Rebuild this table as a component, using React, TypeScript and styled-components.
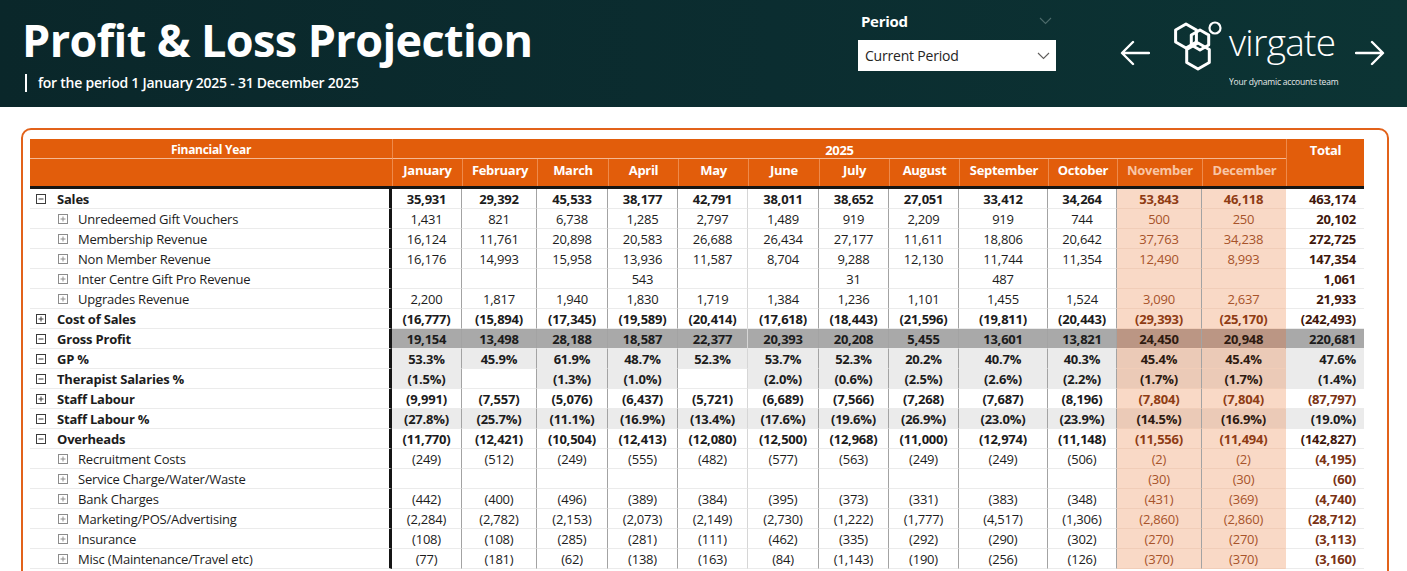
import React from 'react'
import styled, { createGlobalStyle } from 'styled-components'

const GlobalStyle = createGlobalStyle`
  html, body {
    margin: 0;
    padding: 0;
    background: #ffffff;
  }
  body {
    font-family: "Open Sans", "Noto Sans", sans-serif;
  }
  * {
    box-sizing: border-box;
  }
`

// column widths: label, Jan..Dec, Total
const COLS = '362px 70px 75px 71px 70px 70px 71px 70px 70px 89px 69px 85px 84px 78px'

const MONTHS = [
    'January', 'February', 'March', 'April', 'May', 'June',
    'July', 'August', 'September', 'October', 'November', 'December',
]

// November + December are the projected months
const FORECAST_FROM = 10

type Tone = 'dark' | 'light'

interface PLRow {
    label: string;
    level: 0 | 1;
    open?: boolean;
    bold?: boolean;
    tone?: Tone;
    mutedTotal?: boolean;
    values: string[];
}

const ROWS: PLRow[] = [
    { label: 'Sales', level: 0, open: true, bold: true, values: ['35,931', '29,392', '45,533', '38,177', '42,791', '38,011', '38,652', '27,051', '33,412', '34,264', '53,843', '46,118', '463,174'] },
    { label: 'Unredeemed Gift Vouchers', level: 1, values: ['1,431', '821', '6,738', '1,285', '2,797', '1,489', '919', '2,209', '919', '744', '500', '250', '20,102'] },
    { label: 'Membership Revenue', level: 1, values: ['16,124', '11,761', '20,898', '20,583', '26,688', '26,434', '27,177', '11,611', '18,806', '20,642', '37,763', '34,238', '272,725'] },
    { label: 'Non Member Revenue', level: 1, values: ['16,176', '14,993', '15,958', '13,936', '11,587', '8,704', '9,288', '12,130', '11,744', '11,354', '12,490', '8,993', '147,354'] },
    { label: 'Inter Centre Gift Pro Revenue', level: 1, values: ['', '', '', '543', '', '', '31', '', '487', '', '', '', '1,061'] },
    { label: 'Upgrades Revenue', level: 1, values: ['2,200', '1,817', '1,940', '1,830', '1,719', '1,384', '1,236', '1,101', '1,455', '1,524', '3,090', '2,637', '21,933'] },
    { label: 'Cost of Sales', level: 0, bold: true, values: ['(16,777)', '(15,894)', '(17,345)', '(19,589)', '(20,414)', '(17,618)', '(18,443)', '(21,596)', '(19,811)', '(20,443)', '(29,393)', '(25,170)', '(242,493)'] },
    { label: 'Gross Profit', level: 0, open: true, bold: true, tone: 'dark', values: ['19,154', '13,498', '28,188', '18,587', '22,377', '20,393', '20,208', '5,455', '13,601', '13,821', '24,450', '20,948', '220,681'] },
    { label: 'GP %', level: 0, open: true, bold: true, tone: 'light', values: ['53.3%', '45.9%', '61.9%', '48.7%', '52.3%', '53.7%', '52.3%', '20.2%', '40.7%', '40.3%', '45.4%', '45.4%', '47.6%'] },
    { label: 'Therapist Salaries %', level: 0, open: true, bold: true, tone: 'light', values: ['(1.5%)', '', '(1.3%)', '(1.0%)', '', '(2.0%)', '(0.6%)', '(2.5%)', '(2.6%)', '(2.2%)', '(1.7%)', '(1.7%)', '(1.4%)'] },
    { label: 'Staff Labour', level: 0, bold: true, mutedTotal: true, values: ['(9,991)', '(7,557)', '(5,076)', '(6,437)', '(5,721)', '(6,689)', '(7,566)', '(7,268)', '(7,687)', '(8,196)', '(7,804)', '(7,804)', '(87,797)'] },
    { label: 'Staff Labour %', level: 0, open: true, bold: true, tone: 'light', values: ['(27.8%)', '(25.7%)', '(11.1%)', '(16.9%)', '(13.4%)', '(17.6%)', '(19.6%)', '(26.9%)', '(23.0%)', '(23.9%)', '(14.5%)', '(16.9%)', '(19.0%)'] },
    { label: 'Overheads', level: 0, open: true, bold: true, values: ['(11,770)', '(12,421)', '(10,504)', '(12,413)', '(12,080)', '(12,500)', '(12,968)', '(11,000)', '(12,974)', '(11,148)', '(11,556)', '(11,494)', '(142,827)'] },
    { label: 'Recruitment Costs', level: 1, mutedTotal: true, values: ['(249)', '(512)', '(249)', '(555)', '(482)', '(577)', '(563)', '(249)', '(249)', '(506)', '(2)', '(2)', '(4,195)'] },
    { label: 'Service Charge/Water/Waste', level: 1, mutedTotal: true, values: ['', '', '', '', '', '', '', '', '', '', '(30)', '(30)', '(60)'] },
    { label: 'Bank Charges', level: 1, mutedTotal: true, values: ['(442)', '(400)', '(496)', '(389)', '(384)', '(395)', '(373)', '(331)', '(383)', '(348)', '(431)', '(369)', '(4,740)'] },
    { label: 'Marketing/POS/Advertising', level: 1, mutedTotal: true, values: ['(2,284)', '(2,782)', '(2,153)', '(2,073)', '(2,149)', '(2,730)', '(1,222)', '(1,777)', '(4,517)', '(1,306)', '(2,860)', '(2,860)', '(28,712)'] },
    { label: 'Insurance', level: 1, mutedTotal: true, values: ['(108)', '(108)', '(285)', '(281)', '(111)', '(462)', '(335)', '(292)', '(290)', '(302)', '(270)', '(270)', '(3,113)'] },
    { label: 'Misc (Maintenance/Travel etc)', level: 1, mutedTotal: true, values: ['(77)', '(181)', '(62)', '(138)', '(163)', '(84)', '(1,143)', '(190)', '(256)', '(126)', '(370)', '(370)', '(3,160)'] },
]

/* ---------- banner ---------- */

const Page = styled.div`
    width: 1407px;
    height: 571px;
    overflow: hidden;
    background: #ffffff;
`

const Banner = styled.header`
    height: 107px;
    display: grid;
    grid-template-columns: 858px 198px 1fr;
    color: #ffffff;
    background: linear-gradient(90deg, #0a272a 0%, #0b2d30 55%, #0c3434 100%);
`

const TitleBlock = styled.div`
    padding: 12px 0 0 22px;
`

const Title = styled.h1`
    margin: 0;
    font-size: 45px;
    line-height: 56px;
    font-weight: 700;
    letter-spacing: -0.6px;
`

const Subtitle = styled.div`
    margin-top: 5px;
    padding-left: 3px;
    display: flex;
    align-items: center;
    font-size: 14px;
    font-weight: 600;
    letter-spacing: -0.25px;

    &::before {
        content: "";
        width: 2px;
        height: 18px;
        margin-right: 11px;
        background: #ffffff;
    }
`

const Slicer = styled.div`
    padding-top: 10px;
`

const SlicerHead = styled.div`
    height: 21px;
    padding: 0 4px 0 3px;
    display: flex;
    align-items: center;
    justify-content: space-between;
    font-size: 15px;
    font-weight: 700;
    letter-spacing: -0.3px;
`

const Dropdown = styled.div`
    margin-top: 9px;
    height: 31px;
    padding: 0 6px 0 7px;
    display: flex;
    align-items: center;
    justify-content: space-between;
    background: #ffffff;
    color: #252423;
    font-size: 14px;
    letter-spacing: -0.2px;
`

const Brand = styled.div`
    padding: 18px 0 0 64px;
    display: flex;
    align-items: flex-start;
`

const NavArrow = styled.svg`
    margin-top: 22px;
    flex: none;
`

const Logo = styled.div`
    margin: 0 17px 0 23px;
    display: flex;
    align-items: flex-start;
`

const Wordmark = styled.div`
    margin-left: 6px;
    display: flex;
    flex-direction: column;
`

const WordmarkName = styled.span`
    font-size: 37px;
    line-height: 40px;
    font-weight: 300;
    letter-spacing: -0.7px;
    margin-top: 4px;
`

const Tagline = styled.span`
    margin-top: 14px;
    font-size: 8.5px;
    letter-spacing: -0.2px;
    opacity: 0.9;
`

/* ---------- table ---------- */

const Content = styled.main`
    padding: 21px 18px 0 21px;
`

const Card = styled.section`
    height: 470px;
    padding: 9px 0 0 7px;
    border: 2px solid #e2621a;
    border-radius: 10px;
`

const HeadGrid = styled.div`
    width: 1334px;
    display: grid;
    grid-template-columns: ${COLS};
    grid-template-rows: 20px 27px;
    background: #e25d0b;
    color: #ffffff;
    font-weight: 700;
    border-bottom: 3px solid #151515;
`

const GroupCell = styled.div<{ $span: string }>`
    grid-column: ${p => p.$span};
    grid-row: 1;
    border-bottom: 1px solid #f5b893;
    text-align: center;
    font-size: 12px;
    line-height: 22px;
    letter-spacing: -0.3px;
`

const YearCell = styled(GroupCell)`
    border-left: 1px solid #ee8a4c;
    font-size: 13px;
`

const TotalHead = styled.div`
    grid-column: 14;
    grid-row: 1 / 3;
    border-left: 1px solid #ee8a4c;
    text-align: center;
    font-size: 13px;
    line-height: 22px;
    letter-spacing: -0.3px;
`

const MonthHead = styled.div<{ $forecast: boolean }>`
    grid-row: 2;
    border-left: 1px solid #ee8a4c;
    display: flex;
    align-items: center;
    justify-content: center;
    padding-bottom: 5px;
    font-size: 13px;
    letter-spacing: -0.3px;
    color: ${p => (p.$forecast ? '#f8c6a6' : '#ffffff')};
`

const BodyRow = styled.div`
    width: 1334px;
    height: 20px;
    display: grid;
    grid-template-columns: ${COLS};
    font-size: 13px;
    letter-spacing: -0.2px;
    color: #1c1c1c;
`

const LabelCell = styled.div<{ $level: 0 | 1; $bold?: boolean }>`
    padding-left: ${p => (p.$level === 0 ? 6 : 28)}px;
    display: flex;
    align-items: center;
    gap: ${p => (p.$level === 0 ? 11 : 10)}px;
    border-right: 3px solid #151515;
    border-bottom: 1px solid #ebebeb;
    font-weight: ${p => (p.$bold ? 700 : 400)};
    white-space: nowrap;
`

const cellBackground = (forecast: boolean, tone?: Tone) => {
    if (tone === 'dark') return forecast ? '#bb9684' : '#a9a9a9'
    if (tone === 'light') return forecast ? '#ebcab7' : '#ebebeb'
    return forecast ? '#f9d9c6' : 'transparent'
}

const ValueCell = styled.div<{ $forecast: boolean; $tone?: Tone; $bold?: boolean; $divider: 'hard' | 'soft' | 'none' }>`
    display: flex;
    align-items: center;
    justify-content: center;
    padding-top: 1px;
    border-bottom: 1px solid ${p => (p.$forecast ? '#f1cdb8' : '#ebebeb')};
    border-right: 1px solid ${p => (p.$divider === 'hard' ? '#a3a3a3' : p.$divider === 'soft' ? '#d6d6d6' : 'transparent')};
    background: ${p => cellBackground(p.$forecast, p.$tone)};
    font-weight: ${p => (p.$bold ? 700 : 400)};
    color: ${p => {
        if (!p.$forecast) return '#1c1c1c'
        if (p.$tone) return '#2e1a10'
        return p.$bold ? '#8f3c14' : '#a7532a'
    }};
`

const TotalCell = styled.div<{ $tone?: Tone; $muted?: boolean }>`
    display: flex;
    align-items: center;
    justify-content: flex-end;
    padding: 1px 8px 0 0;
    border-bottom: 1px solid #ebebeb;
    background: ${p => cellBackground(false, p.$tone)};
    font-weight: 700;
    color: ${p => (p.$tone ? '#1c1c1c' : p.$muted ? '#7a3214' : '#3f170b')};
`

function ToggleBox({ open, level }: { open?: boolean; level: 0 | 1 }) {
    const stroke = level === 0 ? '#3c3c3c' : '#8c8c8c'
    return (
        <svg width="10" height="10" viewBox="0 0 10 10" style={{ flex: 'none' }}>
            <rect x="0.5" y="0.5" width="9" height="9" fill="#ffffff" stroke={stroke} />
            <line x1="2.5" y1="5" x2="7.5" y2="5" stroke={stroke} />
            {!open && <line x1="5" y1="2.5" x2="5" y2="7.5" stroke={stroke} />}
        </svg>
    )
}

function Chevron({ color }: { color: string }) {
    return (
        <svg width="13" height="8" viewBox="0 0 13 8">
            <polyline points="1,1 6.5,6.5 12,1" fill="none" stroke={color} strokeWidth="1.1" />
        </svg>
    )
}

function Arrow({ dir }: { dir: 'left' | 'right' }) {
    const d = dir === 'left' ? 'M29 13H3 M13 2 2 13l11 11' : 'M1 13h26 M17 2l11 11-11 11'
    return (
        <NavArrow width="30" height="26" viewBox="0 0 30 26">
            <path d={d} fill="none" stroke="#ffffff" strokeWidth="2.4" strokeLinecap="round" strokeLinejoin="round" />
        </NavArrow>
    )
}

// pointy-top hexagon outline around a centre
const hex = (cx: number, cy: number, r: number) =>
    [0, 1, 2, 3, 4, 5]
        .map(i => {
            const a = (Math.PI / 3) * i - Math.PI / 2
            return `${(cx + r * Math.cos(a)).toFixed(1)},${(cy + r * Math.sin(a)).toFixed(1)}`
        })
        .join(' ')

function VirgateMark() {
    return (
        <svg width="50" height="54" viewBox="0 0 50 54">
            <g fill="none" stroke="#ffffff" strokeWidth="3" strokeLinejoin="round">
                <polygon points={hex(13, 18, 12)} />
                <polygon points={hex(27, 22, 10)} />
                <polygon points={hex(25, 38, 13)} />
                <circle cx="42" cy="10" r="5.5" strokeWidth="2.2" />
            </g>
        </svg>
    )
}

function dividerFor(i: number): 'hard' | 'soft' | 'none' {
    if (i === 11) return 'none'
    if (i === 4) return 'soft'
    return 'hard'
}

export default function App() {
    return (
        <Page>
            <GlobalStyle />
            <Banner>
                <TitleBlock>
                    <Title>Profit &amp; Loss Projection</Title>
                    <Subtitle>for the period 1 January 2025 - 31 December 2025</Subtitle>
                </TitleBlock>

                <Slicer>
                    <SlicerHead>
                        <span>Period</span>
                        <Chevron color="#4d6b6b" />
                    </SlicerHead>
                    <Dropdown>
                        <span>Current Period</span>
                        <Chevron color="#605e5c" />
                    </Dropdown>
                </Slicer>

                <Brand>
                    <Arrow dir="left" />
                    <Logo>
                        <VirgateMark />
                        <Wordmark>
                            <WordmarkName>virgate</WordmarkName>
                            <Tagline>Your dynamic accounts team</Tagline>
                        </Wordmark>
                    </Logo>
                    <Arrow dir="right" />
                </Brand>
            </Banner>

            <Content>
                <Card>
                    <HeadGrid>
                        <GroupCell $span="1">Financial Year</GroupCell>
                        <YearCell $span="2 / 14">2025</YearCell>
                        <TotalHead>Total</TotalHead>
                        {MONTHS.map((m, i) => (
                            <MonthHead key={m} $forecast={i >= FORECAST_FROM} style={{ gridColumn: i + 2 }}>
                                {m}
                            </MonthHead>
                        ))}
                    </HeadGrid>

                    {ROWS.map(row => (
                        <BodyRow key={row.label}>
                            <LabelCell $level={row.level} $bold={row.bold}>
                                <ToggleBox open={row.open} level={row.level} />
                                <span>{row.label}</span>
                            </LabelCell>
                            {row.values.slice(0, 12).map((v, i) => (
                                <ValueCell
                                    key={i}
                                    $forecast={i >= FORECAST_FROM}
                                    $tone={v ? row.tone : undefined}
                                    $bold={row.bold}
                                    $divider={dividerFor(i)}
                                >
                                    {v}
                                </ValueCell>
                            ))}
                            <TotalCell $tone={row.tone} $muted={row.mutedTotal}>
                                {row.values[12]}
                            </TotalCell>
                        </BodyRow>
                    ))}
                </Card>
            </Content>
        </Page>
    )
}
